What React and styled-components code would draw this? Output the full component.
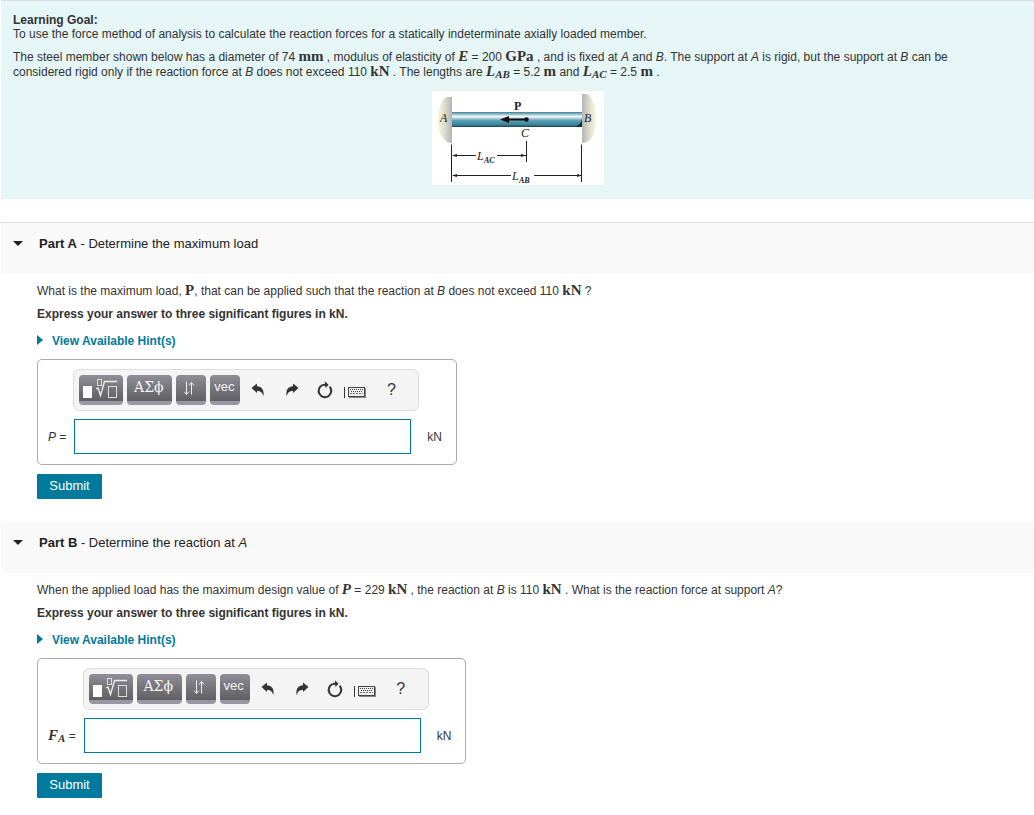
import React from 'react';
import styled, { createGlobalStyle } from 'styled-components';

const toolIcons = {
  undo: (
    <svg width="14" height="14" viewBox="0 0 14 14" aria-hidden="true">
      <path d="M0.5 5 L6 0.5 V3.2 C10.5 3.4 13.4 6.4 12.4 13 C11.2 9.6 9.6 7.9 6 7.8 V10 Z" fill="#333" />
    </svg>
  ),
  redo: (
    <svg width="14" height="14" viewBox="0 0 14 14" aria-hidden="true">
      <path d="M13.5 5 L8 0.5 V3.2 C3.5 3.4 0.6 6.4 1.6 13 C2.8 9.6 4.4 7.9 8 7.8 V10 Z" fill="#333" />
    </svg>
  ),
  reset: (
    <svg width="16" height="18" viewBox="0 0 16 18" aria-hidden="true">
      <path d="M12.6 5.6 A6.3 6.3 0 1 1 5.4 4.1" fill="none" stroke="#333" strokeWidth="2" />
      <path d="M5.4 4.1 Q8 3.4 9 3.8" fill="none" stroke="#333" strokeWidth="2" />
      <path d="M7.8 0.2 L11.6 3.8 L8.4 7 Z" fill="#333" />
    </svg>
  ),
  keyboard: (
    <svg width="22" height="12" viewBox="0 0 22 12" aria-hidden="true">
      <path d="M0.5 1 V12" stroke="#333" />
      <rect x="4.5" y="1.5" width="16" height="9" fill="#eee" stroke="#444" />
      <path d="M5 11.5 H21.5 M21.5 2 V12" stroke="#888" />
      <path d="M6 3.5 H19 M7 5.5 H18" stroke="#444" strokeDasharray="1 1" />
      <path d="M6 7.5 H19" stroke="#777" strokeDasharray="2 1" />
    </svg>
  ),
};

const TemplateIcon = () => (
  <svg width="36" height="22" viewBox="0 0 36 22" aria-hidden="true">
    <rect x="1" y="7" width="9" height="12" fill="#fff" />
    <rect x="15.5" y="0.5" width="4" height="6" fill="none" stroke="#ddd" />
    <path d="M14 10 L16 9 L18.5 16.5 L22.5 2.5 H35" fill="none" stroke="#eee" strokeWidth="1.3" />
    <rect x="26.5" y="7.5" width="8" height="11" fill="none" stroke="#ddd" />
  </svg>
);

const ArrowsIcon = () => (
  <svg width="12" height="18" viewBox="0 0 12 18" aria-hidden="true">
    <path d="M2.5 2.5 V15 M0 12.5 L2.5 15.5 L5 12.5" fill="none" stroke="#eee" />
    <path d="M7.5 15.5 V4 M5 6.5 L7.5 3.5 L10 6.5" fill="none" stroke="#eee" />
  </svg>
);

const Toolbar = () => (
  <ToolbarBox>
    <DarkButton type="button" $width={44} aria-label="Templates"><TemplateIcon /></DarkButton>
    <DarkButton type="button" $width={45} $serif>ΑΣϕ</DarkButton>
    <DarkButton type="button" $width={30} aria-label="Arrows"><ArrowsIcon /></DarkButton>
    <DarkButton type="button" $width={30}>vec</DarkButton>
    <IconGroup>
      <IconButton type="button" $width={28} aria-label="Undo">{toolIcons.undo}</IconButton>
      <IconButton type="button" $width={40} aria-label="Redo">{toolIcons.redo}</IconButton>
      <IconButton type="button" $width={26} aria-label="Reset">{toolIcons.reset}</IconButton>
      <IconButton type="button" $width={34} $low aria-label="Keyboard">{toolIcons.keyboard}</IconButton>
      <IconButton type="button" $width={38}>?</IconButton>
    </IconGroup>
  </ToolbarBox>
);

const MemberFigure = () => (
  <Figure viewBox="0 0 172 94" role="img" aria-label="Axially loaded member">
    <defs>
      <linearGradient id="rod" x1="0" y1="0" x2="0" y2="1">
        <stop offset="0" stopColor="#3d7f92" />
        <stop offset="0.12" stopColor="#7fb4c2" />
        <stop offset="0.3" stopColor="#f4fafb" />
        <stop offset="0.42" stopColor="#b5d3dc" />
        <stop offset="0.55" stopColor="#5aa3b8" />
        <stop offset="0.85" stopColor="#3c8399" />
        <stop offset="1" stopColor="#14444f" />
      </linearGradient>
      <linearGradient id="wallLeft" x1="0" y1="0" x2="1" y2="0">
        <stop offset="0" stopColor="#f9f5d8" />
        <stop offset="0.4" stopColor="#e3e1d0" />
        <stop offset="1" stopColor="#b4b4b6" />
      </linearGradient>
      <linearGradient id="wallRight" x1="1" y1="0" x2="0" y2="0">
        <stop offset="0" stopColor="#f9f5d8" />
        <stop offset="0.4" stopColor="#e3e1d0" />
        <stop offset="1" stopColor="#b4b4b6" />
      </linearGradient>
    </defs>
    <rect width="172" height="94" fill="#fff" />
    <path d="M20 6 H15 C9 8 6 18 6 29 C6 40 10 50 18 52 H20 Z" fill="url(#wallLeft)" />
    <path d="M150 3 H155 C161 6 164 17 164 29 C164 42 160 50 152 52 H150 Z" fill="url(#wallRight)" />
    <rect x="20" y="21" width="130" height="15" fill="url(#rod)" />
    <path d="M143 36 Q149 34 150 28 V36 Z" fill="#0d2d35" />
    <path d="M75 28.5 H95" stroke="#111" strokeWidth="2" />
    <path d="M68 28.5 L77 25 V32 Z" fill="#111" />
    <circle cx="94.5" cy="28.5" r="2.2" fill="#111" />
    <path d="M19.5 53.5 V91 M94.5 50 V71 M149.5 53.5 V91" stroke="#222" />
    <path d="M21 64.5 H44 M65 64.5 H94 M21 84.5 H79 M102 84.5 H149" stroke="#222" />
    <path d="M20 64.5 L25 63 V66 Z M94 64.5 L89 63 V66 Z M20 84.5 L25 83 V86 Z M150 84.5 L145 83 V86 Z" fill="#222" />
    <FigureText x="82" y="19" $bold>P</FigureText>
    <FigureText x="8" y="31" $italic>A</FigureText>
    <FigureText x="152" y="31" $italic>B</FigureText>
    <FigureText x="89" y="46" $italic>C</FigureText>
    <FigureText x="45" y="69" $italic>L</FigureText>
    <FigureText x="52" y="72" $italic $small>AC</FigureText>
    <FigureText x="80" y="89" $italic>L</FigureText>
    <FigureText x="87" y="92" $italic $small>AB</FigureText>
  </Figure>
);

const Part = ({ id, title, question, label, divided }) => (
  <section>
    <PartHeader $divided={divided}>
      <Caret />
      <PartTitle>
        <b>Part {id}</b> - {title}
      </PartTitle>
    </PartHeader>
    <PartBody>
      <Question>{question}</Question>
      <Instruction>Express your answer to three significant figures in kN.</Instruction>
      <HintLink href="#hints">View Available Hint(s)</HintLink>
      <AnswerBox>
        <Toolbar />
        <AnswerLabel htmlFor={`answer-${id}`}>{label} =</AnswerLabel>
        <AnswerInput id={`answer-${id}`} type="text" />
        <Unit>kN</Unit>
      </AnswerBox>
      <SubmitButton type="button">Submit</SubmitButton>
    </PartBody>
  </section>
);

const App = () => (
  <Page>
    <GlobalStyle />
    <Intro>
      <Goal>
        <b>Learning Goal:</b>
        <br />
        To use the force method of analysis to calculate the reaction forces for a statically
        indeterminate axially loaded member.
      </Goal>
      <Problem>
        The steel member shown below has a diameter of 74 <MathText>mm</MathText> , modulus of
        elasticity of <MathVar>E</MathVar> = 200 <MathText>GPa</MathText> , and is fixed at <i>A</i> and <i>B</i>.
        The support at <i>A</i> is rigid, but the support at <i>B</i> can be considered rigid only if
        the reaction force at <i>B</i> does not exceed 110 <MathText>kN</MathText> . The lengths
        are <MathVar>L<sub>AB</sub></MathVar> = 5.2 <MathText>m</MathText> and <MathVar>L<sub>AC</sub></MathVar> = 2.5 <MathText>m</MathText> .
      </Problem>
      <MemberFigure />
    </Intro>
    <Part
      id="A"
      divided
      title="Determine the maximum load"
      question={(
        <>
          What is the maximum load, <MathText>P</MathText>, that can be applied such that the
          reaction at <i>B</i> does not exceed 110 <MathText>kN</MathText> ?
        </>
      )}
      label={<i>P</i>}
    />
    <Part
      id="B"
      title={<>Determine the reaction at <i>A</i></>}
      question={(
        <>
          When the applied load has the maximum design value of <MathVar>P</MathVar> =
          229 <MathText>kN</MathText> , the reaction at <i>B</i> is 110 <MathText>kN</MathText> .
          What is the reaction force at support <i>A</i>?
        </>
      )}
      label={<MathVar>F<sub>A</sub></MathVar>}
    />
  </Page>
);

const GlobalStyle = createGlobalStyle`
  * {
    box-sizing: border-box;
  }
  body {
    margin: 0;
    background: #fff;
    color: #333;
    font-family: "Liberation Sans", Arial, sans-serif;
    font-size: 12px;
  }
  button, input {
    font-family: inherit;
  }
`;

const Page = styled.main`
  padding-left: 1px;
`;

const Intro = styled.section`
  padding: 12px 12px 14px;
  margin-bottom: 23px;
  border-top: 1px solid #ddd;
  background: #e6f6f6;
`;

const Goal = styled.p`
  margin: 0 0 9px;
  line-height: 14px;
`;

const Problem = styled.p`
  margin: 0 0 11px;
  max-width: 980px;
  line-height: 15px;
`;

const MathText = styled.span`
  font-family: "Liberation Serif", "Times New Roman", serif;
  font-size: 15px;
  font-weight: bold;
  line-height: 0;
`;

const MathVar = styled(MathText)`
  font-style: italic;
  & sub {
    font-size: 11px;
    vertical-align: -2px;
  }
`;

const Figure = styled.svg`
  display: block;
  width: 172px;
  margin: 0 auto;
`;

const FigureText = styled.text`
  fill: #222;
  font-family: "Liberation Serif", "Times New Roman", serif;
  font-size: ${props => (props.$small ? '8px' : '12px')};
  font-style: ${props => (props.$italic ? 'italic' : 'normal')};
  font-weight: ${props => (props.$bold || props.$small ? 'bold' : 'normal')};
`;

const PartHeader = styled.header`
  display: flex;
  align-items: flex-start;
  padding: 13px 12px 22px;
  border-top: ${props => (props.$divided ? '1px solid #ddd' : 'none')};
  background: #f9f9f9;
  color: #222;
`;

const Caret = styled.span`
  margin: 5px 16px 0 0;
  border: 5px solid transparent;
  border-top-color: #222;
  border-bottom: 0;
`;

const PartTitle = styled.h2`
  margin: 0;
  font-size: 13px;
  font-weight: normal;
  line-height: 16px;
`;

const PartBody = styled.div`
  display: flex;
  flex-direction: column;
  align-items: flex-start;
  padding: 10px 12px 23px 36px;
`;

const Question = styled.p`
  margin: 0 0 8px;
  line-height: 15px;
`;

const Instruction = styled.p`
  margin: 0 0 12px;
  font-weight: bold;
  line-height: 15px;
`;

const HintLink = styled.a`
  display: flex;
  align-items: flex-start;
  gap: 9px;
  margin-bottom: 10px;
  color: #007a9c;
  font-weight: bold;
  line-height: 15px;
  text-decoration: none;
  &::before {
    content: "";
    margin-top: 1px;
    border: 5px solid transparent;
    border-left: 6px solid #007a9c;
    border-right: 0;
  }
`;

const AnswerBox = styled.div`
  display: grid;
  grid-template-columns: auto auto auto;
  row-gap: 8px;
  align-items: center;
  margin-bottom: 9px;
  padding: 9px 14px 10px 10px;
  border: 1px solid #aaa;
  border-radius: 5px;
`;

const ToolbarBox = styled.div`
  display: flex;
  grid-column: 2;
  grid-row: 1;
  gap: 4px;
  padding: 5px 8px 5px 5px;
  border: 1px solid #ddd;
  border-radius: 6px;
  background: #f4f4f4;
`;

const DarkButton = styled.button`
  display: flex;
  align-items: flex-start;
  justify-content: center;
  width: ${props => props.$width}px;
  height: 30px;
  padding: 4px 2px 0 0;
  border: 0;
  border-bottom: 4px solid #9997a3;
  border-radius: 4px;
  background: linear-gradient(#8f8d96, #605f62);
  color: #f4f4f4;
  font-family: ${props => (props.$serif ? '"DejaVu Serif", serif' : 'inherit')};
  font-size: ${props => (props.$serif ? '14px' : '13px')};
  line-height: 16px;
`;

const IconGroup = styled.div`
  display: flex;
  align-items: center;
`;

const IconButton = styled.button`
  display: flex;
  align-items: center;
  justify-content: center;
  width: ${props => props.$width}px;
  height: 30px;
  padding: ${props => (props.$low ? '4px 0 0' : '0')};
  border: 0;
  background: transparent;
  color: #333;
  font-size: 16px;
`;

const AnswerLabel = styled.label`
  grid-column: 1;
  grid-row: 2;
  padding-right: 7px;
`;

const AnswerInput = styled.input`
  grid-column: 2;
  grid-row: 2;
  width: 337px;
  height: 35px;
  margin-left: 1px;
  padding: 0 8px;
  border: 1px solid #007a9c;
  background: #fff;
  font-size: 14px;
`;

const Unit = styled.span`
  grid-column: 3;
  grid-row: 2;
  padding-left: 8px;
`;

const SubmitButton = styled.button`
  min-width: 65px;
  height: 25px;
  padding: 0 12px 2px;
  border: 0;
  border-radius: 1px;
  background: #007a9c;
  color: #fff;
  font-size: 13px;
`;

export default App;
